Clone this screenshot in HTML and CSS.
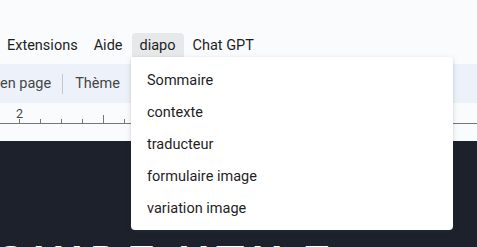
FILE: index.html
```html
<!DOCTYPE html>
<html lang="fr">
<head>
  <meta charset="UTF-8" />
  <title>diapo</title>
  <link rel="stylesheet" href="styles.css">
</head>
<body>

<div class="menubar">
  <span class="menu-item">Extensions</span>
  <span class="menu-item">Aide</span>
  <span class="menu-item active">diapo</span>
  <span class="menu-item">Chat GPT</span>
</div>

<div class="toolbar">
  <span class="tool">en page</span>
  <span class="sep"></span>
  <span class="tool">Thème</span>
</div>

<div class="ruler">
  <div class="ruler-num">2</div>
  <div class="ruler-line">
    <span class="tick"></span>
    <span class="tick"></span>
    <span class="tick"></span>
    <span class="tick"></span>
    <span class="tick big"></span>
    <span class="tick"></span>
  </div>
</div>

<div class="slide">
  <div class="slide-title">GUIDE UTILE</div>
</div>

<div class="dropdown">
  <div class="drop-item">Sommaire</div>
  <div class="drop-item">contexte</div>
  <div class="drop-item">traducteur</div>
  <div class="drop-item">formulaire image</div>
  <div class="drop-item">variation image</div>
</div>

</body>
</html>
```

FILE: styles.css
```css
body {
  margin: 0;
  font-family: Roboto, "Liberation Sans", sans-serif;
  background: #f9fbfd;
  color: #1f1f1f;
  height: 247px;
  overflow: hidden;
}
.menubar {
  display: flex;
  gap: 2px;
  padding-top: 33px;
  height: 24px;
  padding-bottom: 7px;
}
.menu-item {
  font-size: 14.5px;
  line-height: 25px;
  padding: 0 7px;
  border-radius: 4px 4px 0 0;
}
.menu-item.active {
  background: #e6e8ea;
  padding: 0 8px;
}
.toolbar {
  display: flex;
  align-items: center;
  height: 39px;
  background: #edf2fa;
  font-size: 14.5px;
  color: #444746;
}
.sep {
  width: 1px;
  height: 20px;
  background: #c7c7c7;
  margin: 0 12px 0 11px;
}
.ruler {
  height: 38px;
  background: #f9fbfd;
}
.ruler-num {
  font-size: 12.5px;
  color: #444746;
  padding: 5px 0 0 16px;
  height: 12px;
  line-height: 12px;
}
.ruler-line {
  display: flex;
  align-items: flex-end;
  height: 3px;
  border-bottom: 1px solid #747775;
  padding-left: 19px;
  gap: 20px;
}
.tick {
  width: 1px;
  height: 4px;
  flex: none;
  background: #747775;
}
.tick.big {
  height: 8px;
}
.slide {
  background: #1c212b;
  height: 106px;
  overflow: hidden;
}
.slide-title {
  color: #fff;
  font-size: 48px;
  font-weight: 500;
  letter-spacing: 6px;
  padding-top: 99px;
  margin-left: -6px;
  line-height: 48px;
}
.dropdown {
  position: absolute;
  left: 131px;
  top: 57px;
  width: 322px;
  height: 173px;
  background: #fff;
  border-radius: 0 4px 4px 4px;
  box-shadow: 0 2px 6px rgba(60,64,67,0.12), 0 1px 2px rgba(60,64,67,0.22);
  padding-top: 8px;
  box-sizing: border-box;
}
.drop-item {
  font-size: 14.5px;
  height: 32px;
  line-height: 32px;
  padding-left: 16px;
  color: #1f1f1f;
}
```
